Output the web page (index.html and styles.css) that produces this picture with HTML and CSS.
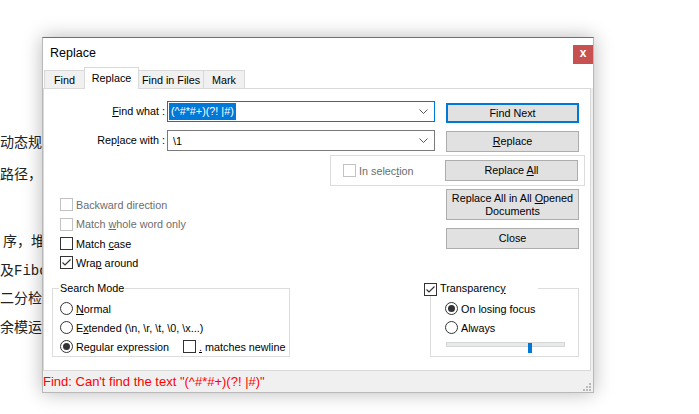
FILE: index.html
```html
<!DOCTYPE html>
<html>
<head>
<meta charset="utf-8">
<title>Replace</title>
<link rel="stylesheet" href="styles.css">
</head>
<body>
<div class="page">
  <div class="ln l1">动态规划</div>
  <div class="ln l2">路径，</div>
  <div class="ln l3">序，堆</div>
  <div class="ln l4">及<span class="mono">Fibonacci</span></div>
  <div class="ln l5">二分检索</div>
  <div class="ln l6">余模运算</div>
</div>

<div class="dialog">
  <div class="titlebar">
    <span class="title">Replace</span>
    <span class="close">x</span>
  </div>
  <div class="tabs">
    <div class="tab t-find">Find</div>
    <div class="tab t-replace active">Replace</div>
    <div class="tab t-fif">Find in Files</div>
    <div class="tab t-mark">Mark</div>
  </div>
  <div class="panel">
    <div class="row">
      <div class="lbl"><u>F</u>ind what :</div>
      <div class="combo focus">
        <span class="sel">(^#*#+)(?! |#)</span>
        <svg class="chev" width="9" height="5" viewBox="0 0 9 5"><polyline points="0.5,0.5 4.5,4.5 8.5,0.5" fill="none" stroke="#555" stroke-width="1"/></svg>
      </div>
      <div class="btn default"><span>Find Next</span></div>
    </div>
    <div class="row row2">
      <div class="lbl">Rep<u>l</u>ace with :</div>
      <div class="combo">
        <span class="val">\1</span>
        <svg class="chev" width="9" height="5" viewBox="0 0 9 5"><polyline points="0.5,0.5 4.5,4.5 8.5,0.5" fill="none" stroke="#555" stroke-width="1"/></svg>
      </div>
      <div class="btn"><span><u>R</u>eplace</span></div>
    </div>
    <div class="selbox">
      <div class="chk dis"><span class="box"></span><span>In selec<u>t</u>ion</span></div>
      <div class="btn"><span>Replace <u>A</u>ll</span></div>
    </div>
    <div class="mid">
      <div class="opts">
        <div class="chk dis"><span class="box"></span><span>Backward direction</span></div>
        <div class="chk dis r20"><span class="box"></span><span>Match <u>w</u>hole word only</span></div>
        <div class="chk"><span class="box"></span><span>Match <u>c</u>ase</span></div>
        <div class="chk"><span class="box"><svg width="11" height="11" viewBox="0 0 11 11"><polyline points="1.5,5.5 4,8 9.5,2.5" fill="none" stroke="#333" stroke-width="1.2"/></svg></span><span>Wra<u>p</u> around</span></div>
      </div>
      <div class="btncol">
        <div class="btn tall"><span>Replace All in All <u>O</u>pened<br>Documents</span></div>
        <div class="btn"><span>Close</span></div>
      </div>
    </div>
    <div class="groups">
      <fieldset class="grp mode">
        <legend>Search Mode</legend>
        <div class="rad"><span class="dot"></span><span><u>N</u>ormal</span></div>
        <div class="rad"><span class="dot"></span><span>E<u>x</u>tended (\n, \r, \t, \0, \x...)</span></div>
        <div class="rad"><span class="radlbl"><span class="dot on"></span><span>Re<u>g</u>ular expression</span></span><span class="chk"><span class="box"></span><span><u>.</u> matches newline</span></span></div>
      </fieldset>
      <fieldset class="grp trans">
        <legend><span class="box lbox"><svg width="11" height="11" viewBox="0 0 11 11"><polyline points="1.5,5.5 4,8 9.5,2.5" fill="none" stroke="#333" stroke-width="1.2"/></svg></span>Transparenc<u>y</u></legend>
        <div class="tin">
          <div class="rad"><span class="dot on"></span><span>On losing focus</span></div>
          <div class="rad r20"><span class="dot"></span><span>Always</span></div>
          <div class="slider"><div class="track"></div><span class="thumb"></span></div>
        </div>
      </fieldset>
    </div>
  </div>
  <div class="status">
    <span class="msg">Find: Can't find the text "(^#*#+)(?! |#)"</span>
    <svg class="grip" width="9" height="9" viewBox="0 0 9 9">
      <rect x="6" y="0" width="2" height="2" fill="#b9b9b9"/>
      <rect x="3" y="3" width="2" height="2" fill="#b9b9b9"/>
      <rect x="6" y="3" width="2" height="2" fill="#b9b9b9"/>
      <rect x="0" y="6" width="2" height="2" fill="#b9b9b9"/>
      <rect x="3" y="6" width="2" height="2" fill="#b9b9b9"/>
      <rect x="6" y="6" width="2" height="2" fill="#b9b9b9"/>
    </svg>
  </div>
</div>
</body>
</html>
```

FILE: styles.css
```css
* { box-sizing: border-box; }
html, body { margin: 0; padding: 0; background: #fff; }
body {
  width: 699px;
  height: 414px;
  overflow: hidden;
  position: relative;
  font-family: "Liberation Sans", Arial, sans-serif;
}
u { text-decoration: underline; text-underline-offset: 1px; }

/* background document */
.page { font-family: "Noto Sans CJK SC", sans-serif; font-size: 14px; color: #222; }
.ln { height: 20px; line-height: 20px; white-space: nowrap; }
.mono { font-family: "Liberation Mono", monospace; }
.l1 { margin-top: 131px; }
.l2 { margin-top: 12px; }
.l3 { margin-top: 47px; padding-left: 3px; }
.l4 { margin-top: 9px; }
.l5 { margin-top: 8px; }
.l6 { margin-top: 9px; }

/* dialog window */
.dialog {
  position: absolute;
  left: 42px;
  top: 37px;
  width: 552px;
  height: 356px;
  background: #f0f0f0;
  border: 1px solid #b8b8b8;
  border-top-color: #4e8d2c;
  box-shadow: 0 0 18px rgba(0, 0, 0, 0.28);
  display: flex;
  flex-direction: column;
  font-size: 10.8px;
  color: #000;
}
.titlebar {
  height: 29px;
  flex: none;
  background: #fff;
  display: flex;
  align-items: center;
  padding-left: 7px;
}
.title { font-size: 12.5px; }
.close {
  margin-left: auto;
  align-self: flex-start;
  margin-top: 7px;
  width: 20px;
  height: 19px;
  background: #c75050;
  color: #fff;
  font-weight: bold;
  font-size: 12px;
  line-height: 17px;
  text-align: center;
}

/* tabs */
.tabs {
  height: 21px;
  flex: none;
  background: #fff;
  display: flex;
  align-items: flex-end;
  padding-left: 1px;
}
.tab {
  height: 18px;
  line-height: 18px;
  text-align: center;
  background: #f0f0f0;
  border: 1px solid #d9d9d9;
  border-bottom: none;
  margin-left: -1px;
}
.t-find { width: 41px; margin-left: 0; }
.t-replace { width: 55px; }
.t-fif { width: 66px; }
.t-mark { width: 42px; }
.tab.active {
  height: 22px;
  line-height: 20px;
  background: #fff;
  margin-bottom: -1px;
  z-index: 2;
}

/* main panel */
.panel {
  height: 283px;
  flex: none;
  margin-right: 2px;
  border: 1px solid #d9d9d9;
  background: #fff;
}
.row { display: flex; height: 21px; margin-top: 12px; }
.row2 { margin-top: 8px; }
.lbl { width: 121px; text-align: right; line-height: 21px; white-space: nowrap; }
.combo {
  margin-left: 2px;
  width: 268px;
  height: 21px;
  border: 1px solid #7a7a7a;
  display: flex;
  align-items: center;
  padding: 1px 6px 1px 1px;
  background: #fff;
}
.combo.focus { border-color: #0078d7; }
.sel {
  background: #0078d7;
  color: #fff;
  height: 17px;
  line-height: 17px;
  padding: 0 2px;
  white-space: pre;
}
.val { padding-left: 4px; }
.chev { margin-left: auto; }

.btn {
  width: 133px;
  height: 21px;
  border: 1px solid #adadad;
  background: #e1e1e1;
  display: flex;
  align-items: center;
  justify-content: center;
  text-align: center;
  line-height: 13px;
  white-space: nowrap;
}
.row .btn { margin-left: auto; margin-right: 11px; margin-top: 1px; }
.row .btn.default { border: 2px solid #0078d7; height: 20px; margin-top: 2px; }

.selbox {
  margin-top: 4px;
  margin-left: 286px;
  width: 255px;
  height: 31px;
  border: 1px solid #dcdcdc;
  display: flex;
  align-items: center;
  padding: 0 6px 0 12px;
}
.selbox .btn { margin-left: auto; }

.mid { display: flex; margin-top: 3px; }
.opts { padding: 6px 0 0 16px; }
.chk { display: flex; align-items: center; height: 19px; white-space: pre; }
.r20 { height: 20px; }
.box {
  width: 13px;
  height: 13px;
  border: 1px solid #333;
  background: #fff;
  margin-right: 3px;
  display: flex;
  align-items: center;
  justify-content: center;
  flex: none;
}
.dis { color: #6d6d6d; }
.dis .box { border-color: #c2c2c2; }
.btncol { margin-left: auto; margin-right: 11px; }
.btn.tall { height: 31px; }
.btncol .btn + .btn { margin-top: 8px; }

/* group boxes */
.groups { display: flex; margin-top: 9px; }
.grp {
  margin: 0;
  border: 1px solid #dcdcdc;
  padding: 4px 0 0 7px;
  min-width: 0;
}
.grp legend {
  padding: 0 1px;
  margin-left: -1px;
  height: 14px;
  line-height: 14px;
  white-space: nowrap;
}
.mode { margin-left: 8px; width: 238px; }
.trans { margin-left: auto; margin-right: 11px; width: 149px; padding: 4px 0 0 0; }
.trans legend { margin-left: -7px; width: 114px; padding: 0; }
.lbox { display: inline-flex; vertical-align: -3px; }
.tin { padding-left: 14px; }
.rad { display: flex; align-items: center; height: 19px; white-space: pre; }
.dot {
  width: 13px;
  height: 13px;
  border: 1px solid #333;
  border-radius: 50%;
  margin-right: 3px;
  display: flex;
  align-items: center;
  justify-content: center;
  flex: none;
  background: #fff;
}
.dot.on::after {
  content: "";
  width: 7px;
  height: 7px;
  border-radius: 50%;
  background: #333;
}
.radlbl { display: flex; align-items: center; width: 123px; }
.slider { position: relative; height: 14px; margin-left: 1px; width: 119px; }
.track {
  margin-top: 5px;
  width: 119px;
  height: 5px;
  background: #e7eaea;
  border: 1px solid #d6d6d6;
}
.thumb {
  position: absolute;
  left: 82px;
  top: 1px;
  width: 4px;
  height: 10px;
  background: #0078d7;
}

/* status bar */
.status {
  height: 21px;
  flex: none;
  display: flex;
  align-items: center;
  background: #f0f0f0;
  color: #f00;
  font-size: 13px;
}
.msg { white-space: pre; }
.grip { margin-left: auto; margin-right: 1px; align-self: flex-end; }
```
